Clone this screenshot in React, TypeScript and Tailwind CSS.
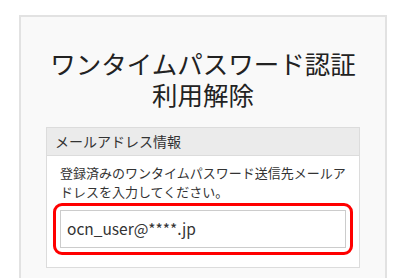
import React from "react";

const font = { fontFamily: '"Noto Sans CJK JP", "Noto Sans", sans-serif' };

export default function App() {
  return (
    <div
      className="w-[406px] h-[278px] overflow-hidden bg-white pt-[15px] pl-[19px]"
      style={font}
    >
      <div className="w-[368px] h-[300px] border-2 border-[#e2e2e2] bg-[#f9f9f9] pt-[30px]">
        <h1 className="flex flex-col items-center text-[25.5px] leading-[31px] text-[#222] font-normal">
          <span>ワンタイムパスワード認証</span>
          <span>利用解除</span>
        </h1>
        <div className="mx-[25px] mt-[18px] border border-[#dcdcdc] bg-white">
          <div className="h-[28px] bg-[#ebebeb] border-b border-[#dcdcdc] pl-[8px] flex items-center text-[14px] text-[#333]">
            メールアドレス情報
          </div>
          <div className="px-[6px] pt-[7px] pb-[12px]">
            <p className="px-[7px] text-[13px] leading-[19px] text-[#333]">
              登録済みのワンタイムパスワード送信先メールアドレスを入力してください。
            </p>
            <div className="mt-[2px] border-[3px] border-[#ff0000] rounded-[9px] p-[4px]">
              <div className="h-[38px] border border-[#cccccc] bg-white flex items-center pl-[6px] text-[15.5px] text-[#333]">
                ocn_user@****.jp
              </div>
            </div>
          </div>
        </div>
      </div>
    </div>
  );
}
